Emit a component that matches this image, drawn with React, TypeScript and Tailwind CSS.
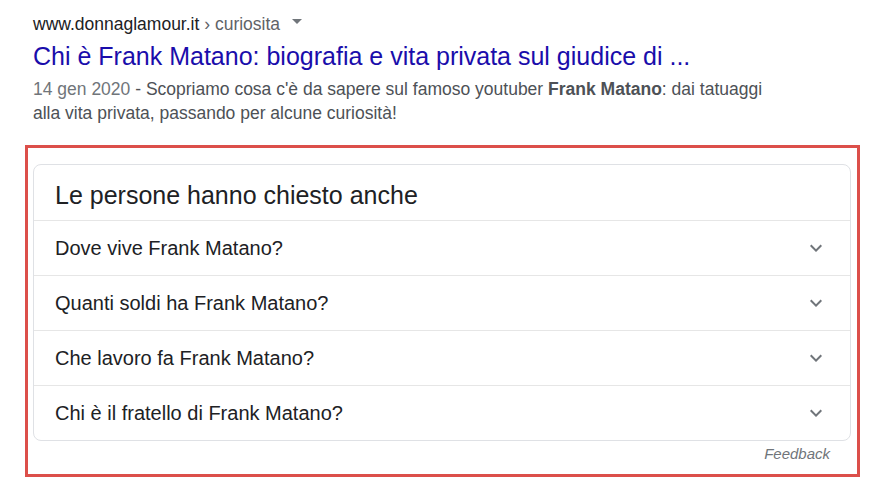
import React from "react"

const questions = [
  "Dove vive Frank Matano?",
  "Quanti soldi ha Frank Matano?",
  "Che lavoro fa Frank Matano?",
  "Chi è il fratello di Frank Matano?",
]

const Chevron = () => (
  <svg width="24" height="24" viewBox="0 0 24 24" className="shrink-0 text-[#70757a]">
    <path fill="currentColor" d="M16.59 8.59L12 13.17 7.41 8.59 6 10l6 6 6-6z" />
  </svg>
)

const QuestionRow: React.FC<{ text: string }> = ({ text }) => (
  <div className="flex h-[55px] items-center justify-between border-t border-[#e6e6e6] pl-[21px] pr-[22px]">
    <span className="text-[20px] leading-[28px] text-[#202124]">{text}</span>
    <Chevron />
  </div>
)

export default function App() {
  return (
    <div className="min-h-screen w-full bg-white font-['Liberation_Sans',Arial,sans-serif]">
      <div className="pl-[33px] pt-[12px]">
        <div className="flex items-center text-[17.5px] leading-[24px]">
          <span className="text-[#202124]">www.donnaglamour.it</span>
          <span className="text-[#5f6368]">&nbsp;› curiosita</span>
          <svg width="10" height="6" viewBox="0 0 10 6" className="ml-[12px] mb-[4px] text-[#70757a]">
            <path fill="currentColor" d="M0 0h10L5 5z" />
          </svg>
        </div>
        <div className="mt-[5px] text-[25px] leading-[30px] text-[#1a0dab]">
          Chi è Frank Matano: biografia e vita privata sul giudice di ...
        </div>
        <p className="mt-[6px] w-[745px] text-[17.5px] leading-[24px] text-[#4d5156]">
          <span className="text-[#70757a]">14 gen 2020</span> - Scopriamo cosa c'è da sapere sul famoso youtuber{" "}
          <b className="font-bold">Frank Matano</b>: dai tatuaggi alla vita privata, passando per alcune curiosità!
        </p>
      </div>

      <div className="ml-[25px] mt-[20px] w-[835px] border-[3px] border-[#dc4f4a] pb-[10px] pl-[5px] pr-[6px] pt-[16px]">
        <div className="rounded-[8px] border border-[#dfe1e5]">
          <div className="h-[55px] pl-[21px] pt-[15px] text-[25px] leading-[30px] text-[#202124]">
            Le persone hanno chiesto anche
          </div>
          {questions.map((q) => (
            <QuestionRow key={q} text={q} />
          ))}
        </div>
        <div className="mt-[3px] pr-[21px] text-right text-[15px] italic leading-[20px] text-[#70757a]">
          Feedback
        </div>
      </div>
    </div>
  )
}
